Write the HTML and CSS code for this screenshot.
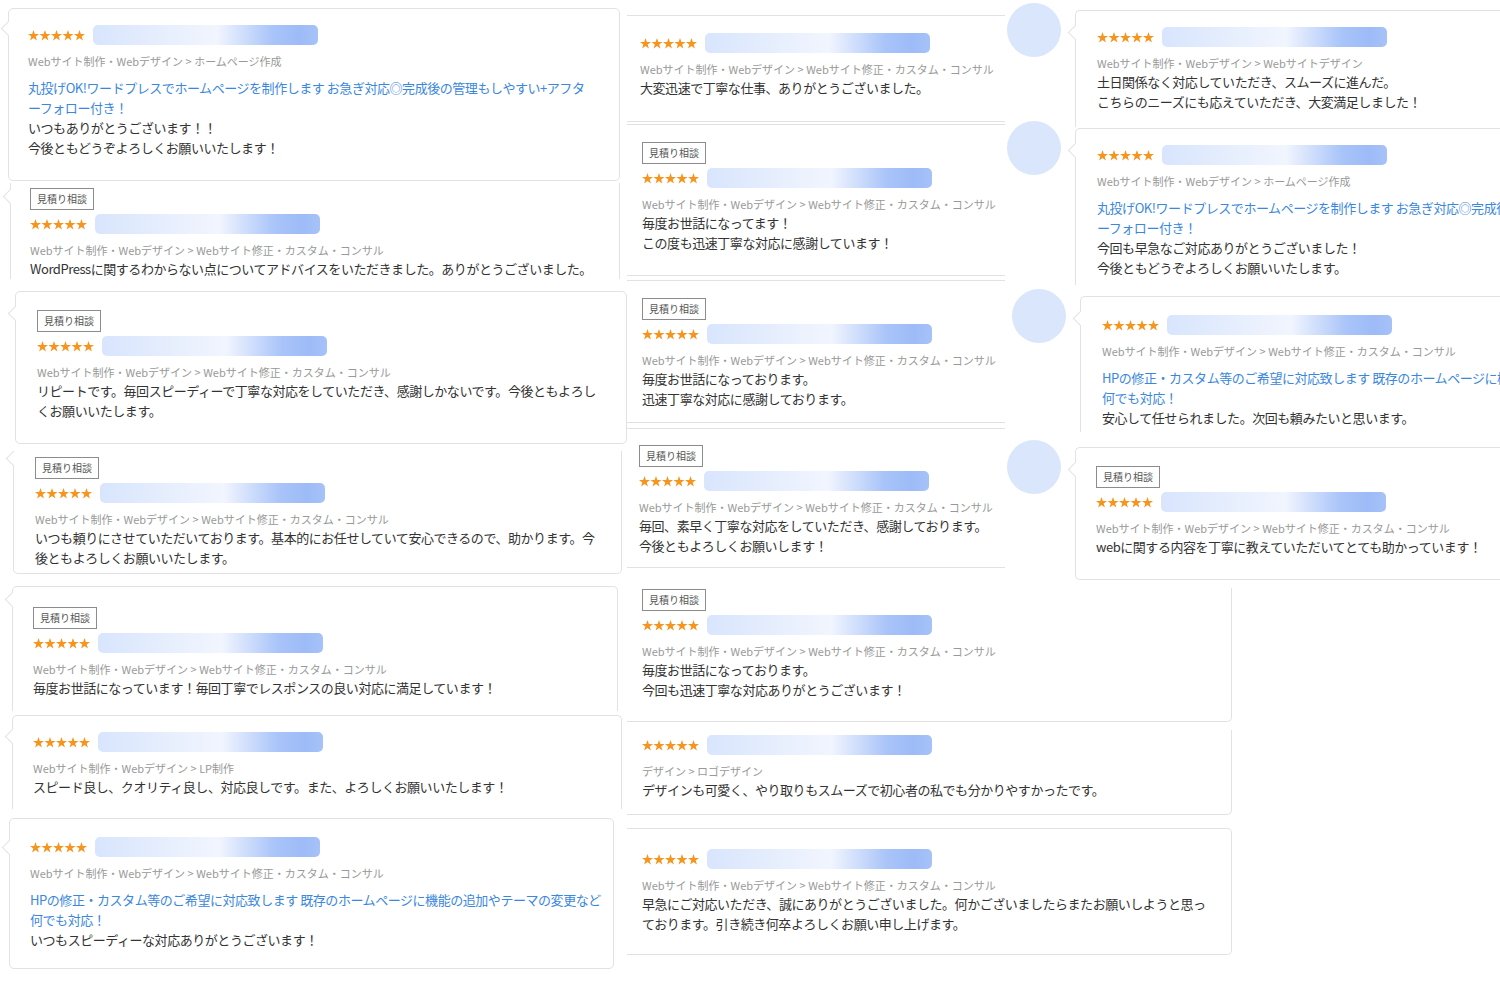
FILE: index.html
```html
<!DOCTYPE html>
<html lang="ja">
<head>
<meta charset="utf-8">
<title>評価・感想</title>
<link rel="stylesheet" href="styles.css">
</head>
<body>
<svg class="defs" width="0" height="0" aria-hidden="true">
    <defs>
        <polygon id="star" points="5.5,0 6.85,3.94 11,4.01 7.69,6.51 8.91,10.5 5.5,8.1 2.09,10.5 3.31,6.51 0,4.01 4.15,3.94"/>
    </defs>
</svg>

<div class="board">
    <!-- 左列 -->
    <div class="col-left">
        <div class="card notch c1">
            <div class="rating">
                <svg class="stars" width="57" height="11" viewBox="0 0 57 11"><use href="#star"/><use href="#star" x="11.5"/><use href="#star" x="23"/><use href="#star" x="34.5"/><use href="#star" x="46"/></svg>
                <div class="bar"></div>
            </div>
            <div class="cat">Webサイト制作・Webデザイン &gt; ホームページ作成</div>
            <div class="link">丸投げOK!ワードプレスでホームページを制作します お急ぎ対応◎完成後の管理もしやすい+アフタ<br>ーフォロー付き！</div>
            <div class="text">いつもありがとうございます！！<br>今後ともどうぞよろしくお願いいたします！</div>
        </div>

        <div class="card notch open-top open-bottom c2">
            <div class="tag">見積り相談</div>
            <div class="rating">
                <svg class="stars" width="57" height="11" viewBox="0 0 57 11"><use href="#star"/><use href="#star" x="11.5"/><use href="#star" x="23"/><use href="#star" x="34.5"/><use href="#star" x="46"/></svg>
                <div class="bar"></div>
            </div>
            <div class="cat">Webサイト制作・Webデザイン &gt; Webサイト修正・カスタム・コンサル</div>
            <div class="text">WordPressに関するわからない点についてアドバイスをいただきました。ありがとうございました。</div>
        </div>

        <div class="card notch c3">
            <div class="tag">見積り相談</div>
            <div class="rating">
                <svg class="stars" width="57" height="11" viewBox="0 0 57 11"><use href="#star"/><use href="#star" x="11.5"/><use href="#star" x="23"/><use href="#star" x="34.5"/><use href="#star" x="46"/></svg>
                <div class="bar"></div>
            </div>
            <div class="cat">Webサイト制作・Webデザイン &gt; Webサイト修正・カスタム・コンサル</div>
            <div class="text">リピートです。毎回スピーディーで丁寧な対応をしていただき、感謝しかないです。今後ともよろし<br>くお願いいたします。</div>
        </div>

        <div class="card notch open-top c4">
            <div class="tag">見積り相談</div>
            <div class="rating">
                <svg class="stars" width="57" height="11" viewBox="0 0 57 11"><use href="#star"/><use href="#star" x="11.5"/><use href="#star" x="23"/><use href="#star" x="34.5"/><use href="#star" x="46"/></svg>
                <div class="bar"></div>
            </div>
            <div class="cat">Webサイト制作・Webデザイン &gt; Webサイト修正・カスタム・コンサル</div>
            <div class="text">いつも頼りにさせていただいております。基本的にお任せしていて安心できるので、助かります。今<br>後ともよろしくお願いいたします。</div>
        </div>

        <div class="card notch open-bottom c5">
            <div class="tag">見積り相談</div>
            <div class="rating">
                <svg class="stars" width="57" height="11" viewBox="0 0 57 11"><use href="#star"/><use href="#star" x="11.5"/><use href="#star" x="23"/><use href="#star" x="34.5"/><use href="#star" x="46"/></svg>
                <div class="bar"></div>
            </div>
            <div class="cat">Webサイト制作・Webデザイン &gt; Webサイト修正・カスタム・コンサル</div>
            <div class="text">毎度お世話になっています！毎回丁寧でレスポンスの良い対応に満足しています！</div>
        </div>

        <div class="card notch open-bottom c6">
            <div class="rating">
                <svg class="stars" width="57" height="11" viewBox="0 0 57 11"><use href="#star"/><use href="#star" x="11.5"/><use href="#star" x="23"/><use href="#star" x="34.5"/><use href="#star" x="46"/></svg>
                <div class="bar"></div>
            </div>
            <div class="cat">Webサイト制作・Webデザイン &gt; LP制作</div>
            <div class="text">スピード良し、クオリティ良し、対応良しです。また、よろしくお願いいたします！</div>
        </div>

        <div class="card notch c7">
            <div class="rating">
                <svg class="stars" width="57" height="11" viewBox="0 0 57 11"><use href="#star"/><use href="#star" x="11.5"/><use href="#star" x="23"/><use href="#star" x="34.5"/><use href="#star" x="46"/></svg>
                <div class="bar"></div>
            </div>
            <div class="cat">Webサイト制作・Webデザイン &gt; Webサイト修正・カスタム・コンサル</div>
            <div class="link">HPの修正・カスタム等のご希望に対応致します 既存のホームページに機能の追加やテーマの変更など<br>何でも対応！</div>
            <div class="text">いつもスピーディーな対応ありがとうございます！</div>
        </div>
    </div>

    <div class="right">
        <div class="upper">
            <!-- 中央列 -->
            <div class="col-mid">
                <div class="card lines d1">
                    <div class="rating">
                        <svg class="stars" width="57" height="11" viewBox="0 0 57 11"><use href="#star"/><use href="#star" x="11.5"/><use href="#star" x="23"/><use href="#star" x="34.5"/><use href="#star" x="46"/></svg>
                        <div class="bar"></div>
                    </div>
                    <div class="cat">Webサイト制作・Webデザイン &gt; Webサイト修正・カスタム・コンサル</div>
                    <div class="text">大変迅速で丁寧な仕事、ありがとうございました。</div>
                </div>

                <div class="card lines d2">
                    <div class="tag">見積り相談</div>
                    <div class="rating">
                        <svg class="stars" width="57" height="11" viewBox="0 0 57 11"><use href="#star"/><use href="#star" x="11.5"/><use href="#star" x="23"/><use href="#star" x="34.5"/><use href="#star" x="46"/></svg>
                        <div class="bar"></div>
                    </div>
                    <div class="cat">Webサイト制作・Webデザイン &gt; Webサイト修正・カスタム・コンサル</div>
                    <div class="text">毎度お世話になってます！<br>この度も迅速丁寧な対応に感謝しています！</div>
                </div>

                <div class="card lines d3">
                    <div class="tag">見積り相談</div>
                    <div class="rating">
                        <svg class="stars" width="57" height="11" viewBox="0 0 57 11"><use href="#star"/><use href="#star" x="11.5"/><use href="#star" x="23"/><use href="#star" x="34.5"/><use href="#star" x="46"/></svg>
                        <div class="bar"></div>
                    </div>
                    <div class="cat">Webサイト制作・Webデザイン &gt; Webサイト修正・カスタム・コンサル</div>
                    <div class="text">毎度お世話になっております。<br>迅速丁寧な対応に感謝しております。</div>
                </div>

                <div class="card lines d4">
                    <div class="tag">見積り相談</div>
                    <div class="rating">
                        <svg class="stars" width="57" height="11" viewBox="0 0 57 11"><use href="#star"/><use href="#star" x="11.5"/><use href="#star" x="23"/><use href="#star" x="34.5"/><use href="#star" x="46"/></svg>
                        <div class="bar"></div>
                    </div>
                    <div class="cat">Webサイト制作・Webデザイン &gt; Webサイト修正・カスタム・コンサル</div>
                    <div class="text">毎回、素早く丁寧な対応をしていただき、感謝しております。<br>今後ともよろしくお願いします！</div>
                </div>
            </div>

            <!-- 右列 -->
            <div class="col-side">
                <div class="row">
                    <div class="avatar"></div>
                    <div class="card notch side-card open-bottom e1">
                        <div class="rating">
                            <svg class="stars" width="57" height="11" viewBox="0 0 57 11"><use href="#star"/><use href="#star" x="11.5"/><use href="#star" x="23"/><use href="#star" x="34.5"/><use href="#star" x="46"/></svg>
                            <div class="bar"></div>
                        </div>
                        <div class="cat">Webサイト制作・Webデザイン &gt; Webサイトデザイン</div>
                        <div class="text">土日関係なく対応していただき、スムーズに進んだ。<br>こちらのニーズにも応えていただき、大変満足しました！</div>
                    </div>
                </div>

                <div class="row e2-row">
                    <div class="avatar"></div>
                    <div class="card notch side-card open-bottom e2">
                        <div class="rating">
                            <svg class="stars" width="57" height="11" viewBox="0 0 57 11"><use href="#star"/><use href="#star" x="11.5"/><use href="#star" x="23"/><use href="#star" x="34.5"/><use href="#star" x="46"/></svg>
                            <div class="bar"></div>
                        </div>
                        <div class="cat">Webサイト制作・Webデザイン &gt; ホームページ作成</div>
                        <div class="link">丸投げOK!ワードプレスでホームページを制作します お急ぎ対応◎完成後の管理もしやすい+アフタ<br>ーフォロー付き！</div>
                        <div class="text">今回も早急なご対応ありがとうございました！<br>今後ともどうぞよろしくお願いいたします。</div>
                    </div>
                </div>

                <div class="row e3-row">
                    <div class="avatar"></div>
                    <div class="card notch side-card open-bottom e3">
                        <div class="rating">
                            <svg class="stars" width="57" height="11" viewBox="0 0 57 11"><use href="#star"/><use href="#star" x="11.5"/><use href="#star" x="23"/><use href="#star" x="34.5"/><use href="#star" x="46"/></svg>
                            <div class="bar"></div>
                        </div>
                        <div class="cat">Webサイト制作・Webデザイン &gt; Webサイト修正・カスタム・コンサル</div>
                        <div class="link">HPの修正・カスタム等のご希望に対応致します 既存のホームページに機能の追加やテーマの変更など<br>何でも対応！</div>
                        <div class="text">安心して任せられました。次回も頼みたいと思います。</div>
                    </div>
                </div>

                <div class="row e4-row">
                    <div class="avatar"></div>
                    <div class="card notch side-card e4">
                        <div class="tag">見積り相談</div>
                        <div class="rating">
                            <svg class="stars" width="57" height="11" viewBox="0 0 57 11"><use href="#star"/><use href="#star" x="11.5"/><use href="#star" x="23"/><use href="#star" x="34.5"/><use href="#star" x="46"/></svg>
                            <div class="bar"></div>
                        </div>
                        <div class="cat">Webサイト制作・Webデザイン &gt; Webサイト修正・カスタム・コンサル</div>
                        <div class="text">webに関する内容を丁寧に教えていただいてとても助かっています！</div>
                    </div>
                </div>
            </div>
        </div>

        <!-- 下段 -->
        <div class="lower">
            <div class="card wide open-top d5">
                <div class="tag">見積り相談</div>
                <div class="rating">
                    <svg class="stars" width="57" height="11" viewBox="0 0 57 11"><use href="#star"/><use href="#star" x="11.5"/><use href="#star" x="23"/><use href="#star" x="34.5"/><use href="#star" x="46"/></svg>
                    <div class="bar"></div>
                </div>
                <div class="cat">Webサイト制作・Webデザイン &gt; Webサイト修正・カスタム・コンサル</div>
                <div class="text">毎度お世話になっております。<br>今回も迅速丁寧な対応ありがとうございます！</div>
            </div>

            <div class="card wide open-top d6">
                <div class="rating">
                    <svg class="stars" width="57" height="11" viewBox="0 0 57 11"><use href="#star"/><use href="#star" x="11.5"/><use href="#star" x="23"/><use href="#star" x="34.5"/><use href="#star" x="46"/></svg>
                    <div class="bar"></div>
                </div>
                <div class="cat">デザイン &gt; ロゴデザイン</div>
                <div class="text">デザインも可愛く、やり取りもスムーズで初心者の私でも分かりやすかったです。</div>
            </div>

            <div class="card wide d7">
                <div class="rating">
                    <svg class="stars" width="57" height="11" viewBox="0 0 57 11"><use href="#star"/><use href="#star" x="11.5"/><use href="#star" x="23"/><use href="#star" x="34.5"/><use href="#star" x="46"/></svg>
                    <div class="bar"></div>
                </div>
                <div class="cat">Webサイト制作・Webデザイン &gt; Webサイト修正・カスタム・コンサル</div>
                <div class="text">早急にご対応いただき、誠にありがとうございました。何かございましたらまたお願いしようと思っ<br>ております。引き続き何卒よろしくお願い申し上げます。</div>
            </div>
        </div>
    </div>
</div>
</body>
</html>
```

FILE: styles.css
```css
body {
    margin: 0;
    background-color: #fff;
    font-family: "Noto Sans CJK JP", "Noto Sans", sans-serif;
    color: #333;
}

.defs {
    position: absolute;
    width: 0;
    height: 0;
}

.board {
    display: flex;
    width: 1500px;
    height: 1000px;
    overflow: hidden;
}

.col-left {
    width: 627px;
    flex-shrink: 0;
    display: flex;
    flex-direction: column;
    align-items: flex-start;
}

.right {
    width: 873px;
    flex-shrink: 0;
    display: flex;
    flex-direction: column;
}

.upper {
    display: flex;
    height: 580px;
}

.col-mid {
    width: 378px;
    flex-shrink: 0;
    display: flex;
    flex-direction: column;
}

.col-side {
    display: flex;
    flex-direction: column;
    margin-left: 2px;
}

.row {
    display: flex;
    align-items: flex-start;
    gap: 14px;
}

.avatar {
    width: 54px;
    height: 54px;
    flex-shrink: 0;
    margin-top: -7px;
    border-radius: 50%;
    background-color: #d9e6fc;
}

.lower {
    display: flex;
    flex-direction: column;
    align-items: flex-start;
}

/* カード */
.card {
    position: relative;
    box-sizing: border-box;
    flex-shrink: 0;
    background-color: #fff;
    border: 1px solid #e2e2e2;
    border-radius: 5px;
    padding: 16px 20px 22px 19px;
}

.notch::before {
    content: "";
    position: absolute;
    left: -6px;
    top: 14px;
    width: 10px;
    height: 10px;
    background-color: #fff;
    border-left: 1px solid #e2e2e2;
    border-bottom: 1px solid #e2e2e2;
    transform: rotate(45deg);
}

.open-top {
    border-top: none;
    border-top-left-radius: 0;
    border-top-right-radius: 0;
}

.open-bottom {
    border-bottom: none;
    border-bottom-left-radius: 0;
    border-bottom-right-radius: 0;
}

.lines {
    border-left: none;
    border-right: none;
    border-radius: 0;
    padding-left: 13px;
}

.wide {
    width: 605px;
    border-left: none;
    border-top-left-radius: 0;
    border-bottom-left-radius: 0;
    padding-left: 15px;
}

.side-card {
    width: 612px;
    border-right: none;
    border-top-right-radius: 0;
    border-bottom-right-radius: 0;
    padding-left: 21px;
}

.tag {
    box-sizing: border-box;
    width: fit-content;
    height: 22px;
    margin-bottom: 4px;
    padding: 0 6px;
    border: 1px solid #8c8c8c;
    font-size: 10px;
    line-height: 20px;
    color: #555;
}

.rating {
    display: flex;
    align-items: center;
    gap: 8px;
    height: 20px;
}

.stars {
    display: block;
    fill: #f7941d;
}

.bar {
    width: 225px;
    height: 20px;
    border-radius: 5px;
    background: linear-gradient(90deg, #d8e5fd 0%, #e6eefd 30%, #f1f5fe 55%, #a9c4f9 80%, #9dbbf7 92%, #a6c2f8 100%);
}

.cat {
    margin-top: 8px;
    font-size: 11px;
    line-height: 17px;
    color: #999;
    white-space: nowrap;
}

.link {
    margin-top: 8px;
    font-size: 13px;
    line-height: 20px;
    letter-spacing: -0.45px;
    color: #3a87dd;
    white-space: nowrap;
}

.text {
    font-size: 13px;
    line-height: 20px;
    letter-spacing: -0.45px;
    color: #333;
    white-space: nowrap;
}

/* 左列の各カード */
.c1 {
    width: 612px;
    margin: 8px 0 0 8px;
}

.c2 {
    width: 610px;
    margin: 2px 0 0 10px;
    padding-top: 5px;
    padding-bottom: 0;
}

.c2::before {
    top: 8px;
}

.c3 {
    width: 612px;
    margin: 12px 0 0 15px;
    padding-top: 18px;
    padding-left: 21px;
}

.c3::before {
    top: 16px;
}

.c4 {
    width: 609px;
    margin: 7px 0 0 13px;
    padding-top: 6px;
    padding-bottom: 5px;
    padding-left: 21px;
}

.c4::before {
    top: 2px;
}

.c5 {
    width: 606px;
    margin: 12px 0 0 12px;
    padding-top: 20px;
    padding-bottom: 13px;
    padding-left: 20px;
}

.c5::before {
    top: 7px;
}

.c6 {
    width: 610px;
    margin: 4px 0 0 12px;
    padding-bottom: 12px;
    padding-left: 20px;
}

.c6::before {
    top: 15px;
}

.c7 {
    width: 605px;
    margin: 9px 0 0 9px;
    padding-top: 18px;
    padding-bottom: 18px;
    padding-left: 20px;
}

.c7::before {
    top: 23px;
}

/* 中央列 */
.d1 {
    margin-top: 15px;
    padding-top: 17px;
    padding-bottom: 23px;
}

.d2 {
    margin-top: 2px;
    padding-top: 17px;
    padding-left: 15px;
}

.d3 {
    margin-top: 4px;
    padding-top: 17px;
    padding-bottom: 13px;
    padding-left: 15px;
}

.d4 {
    margin-top: 5px;
    padding-top: 16px;
    padding-bottom: 11px;
    padding-left: 12px;
}

.d5 {
    margin-top: 8px;
    padding-top: 1px;
    padding-bottom: 21px;
}

.d6 {
    margin-top: 8px;
    padding-top: 5px;
    padding-bottom: 14px;
}

.d7 {
    margin-top: 13px;
    padding-top: 20px;
    padding-bottom: 20px;
}

/* 右列 */
.col-side > .row:first-child {
    margin-top: 10px;
}

.e1 {
    padding-bottom: 15px;
}

.e2-row {
    margin-top: 1px;
}

.e2 {
    padding-bottom: 7px;
}

.e3-row {
    margin: 11px 0 0 5px;
}

.e3 {
    padding-top: 18px;
    padding-bottom: 4px;
}

.e4-row {
    margin-top: 15px;
}

.e4 {
    padding-top: 18px;
    padding-left: 20px;
}

.side-card::before {
    top: 16px;
}
```
